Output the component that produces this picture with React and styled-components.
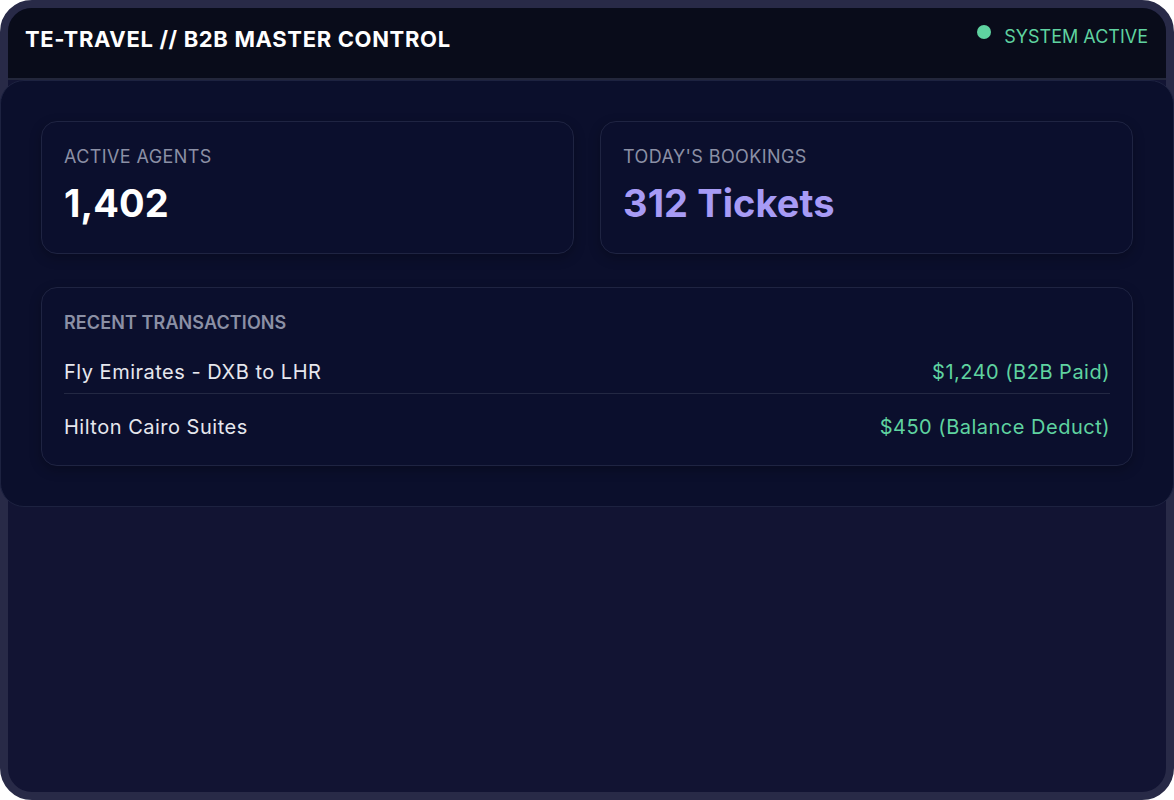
import styled, { createGlobalStyle } from 'styled-components'

const colors = {
  frame: '#282a47',
  page: '#121433',
  header: '#090c1a',
  panel: '#0b0f2c',
  line: '#1f2442',
  grey: '#8b90a5',
  white: '#ffffff',
  text: '#e6e7ee',
  lavender: '#a79bf5',
  green: '#5fd3a0',
}

const stats = [
  { id: 1, label: 'ACTIVE AGENTS', value: '1,402', accent: false },
  { id: 2, label: "TODAY'S BOOKINGS", value: '312 Tickets', accent: true },
]

const transactions = [
  { id: 1, name: 'Fly Emirates - DXB to LHR', amount: '$1,240 (B2B Paid)' },
  { id: 2, name: 'Hilton Cairo Suites', amount: '$450 (Balance Deduct)' },
]

const GlobalStyle = createGlobalStyle`
  * { box-sizing: border-box; }
  html, body {
    margin: 0;
    padding: 0;
    background: #ffffff;
    font-family: Inter, "Noto Sans", sans-serif;
  }
`

const App = () => {
  return (
    <>
      <GlobalStyle />
      <Frame>
        <Header>
          <Title>TE-TRAVEL // B2B MASTER CONTROL</Title>
          <Status>
            <Dot />
            SYSTEM ACTIVE
          </Status>
        </Header>
        <Panel>
          <StatGrid>
            {stats.map((stat) => (
              <Card key={stat.id}>
                <Label>{stat.label}</Label>
                <Value $accent={stat.accent}>{stat.value}</Value>
              </Card>
            ))}
          </StatGrid>
          <Card>
            <SectionTitle>RECENT TRANSACTIONS</SectionTitle>
            {transactions.map((tx) => (
              <Row key={tx.id}>
                <RowName>{tx.name}</RowName>
                <Amount>{tx.amount}</Amount>
              </Row>
            ))}
          </Card>
        </Panel>
      </Frame>
    </>
  )
}

const Frame = styled.div`
  width: 1174px;
  height: 800px;
  border: 8px solid ${colors.frame};
  border-radius: 32px;
  background: ${colors.page};
  display: flex;
  flex-direction: column;
`

const Header = styled.header`
  height: 72px;
  flex-shrink: 0;
  display: flex;
  justify-content: space-between;
  align-items: flex-start;
  padding: 18px 18px 0 17px;
  background: ${colors.header};
  border-radius: 24px 24px 0 0;
  border-bottom: 2px solid #23273b;
`

const Title = styled.h1`
  margin: 0;
  font-size: 22px;
  line-height: 1.21;
  font-weight: 700;
  color: ${colors.white};
  letter-spacing: 0.65px;
`

const Status = styled.div`
  display: flex;
  align-items: flex-start;
  gap: 13px;
  font-size: 18px;
  line-height: 1.21;
  color: ${colors.green};
`

const Dot = styled.span`
  width: 14px;
  height: 14px;
  margin-top: -1px;
  border-radius: 50%;
  background: ${colors.green};
`

const Panel = styled.section`
  margin: 0 -8px;
  padding: 40px;
  background: ${colors.panel};
  border: 1px solid #1d2240;
  border-radius: 24px;
  display: flex;
  flex-direction: column;
  gap: 33px;
`

const StatGrid = styled.div`
  display: grid;
  grid-template-columns: 1fr 1fr;
  gap: 26px;
`

const Card = styled.div`
  padding: 24px 22px 26px;
  background: #0b0f2d;
  border: 1px solid ${colors.line};
  border-radius: 16px;
  box-shadow: 0 4px 12px rgba(0, 0, 0, 0.25);
`

const Label = styled.div`
  font-size: 18px;
  line-height: 1.21;
  letter-spacing: 0.4px;
  color: ${colors.grey};
  margin-bottom: 13px;
`

const Value = styled.div`
  font-size: 38px;
  line-height: 1.21;
  font-weight: 700;
  letter-spacing: 0.1px;
  color: ${(p) => (p.$accent ? colors.lavender : colors.white)};
`

const SectionTitle = styled.h3`
  margin: 0 0 26px;
  font-size: 18px;
  line-height: 1.21;
  font-weight: 600;
  letter-spacing: 0.1px;
  color: ${colors.grey};
`

const Row = styled.div`
  display: flex;
  justify-content: space-between;
  align-items: center;
  font-size: 20px;
  line-height: 1.21;
  letter-spacing: 0.5px;
  padding-bottom: 9px;
  margin-bottom: 21px;
  border-bottom: 1px solid #232843;

  &:last-child {
    padding-bottom: 0;
    margin-bottom: 0;
    border-bottom: none;
  }
`

const RowName = styled.span`
  color: ${colors.text};
`

const Amount = styled.span`
  color: ${colors.green};
`

export default App
